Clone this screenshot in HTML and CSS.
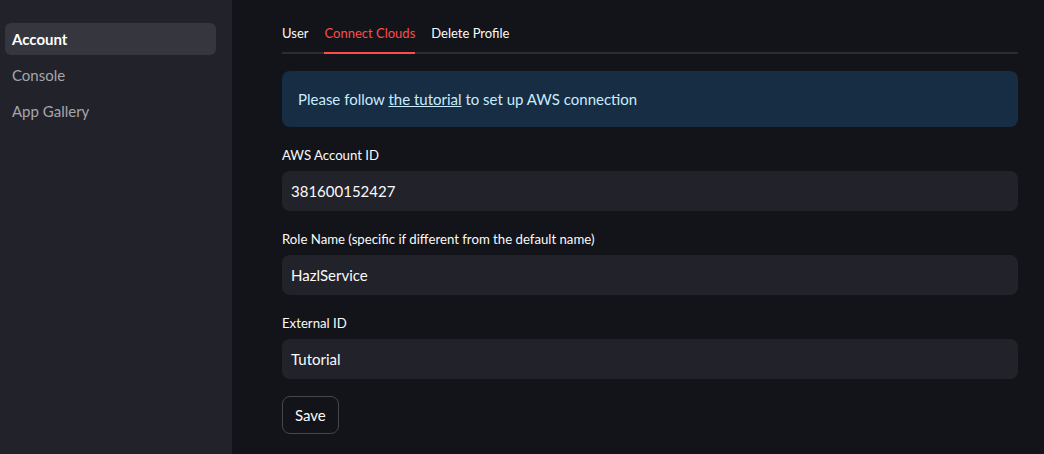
FILE: index.html
```html
<!DOCTYPE html>
<html>
<head>
<meta charset="utf-8">
<link rel="stylesheet" href="styles.css">
</head>
<body>
<aside class="sidebar">
  <nav class="nav">
    <div class="nav-item active">Account</div>
    <div class="nav-item">Console</div>
    <div class="nav-item">App Gallery</div>
  </nav>
</aside>
<main class="main">
  <div class="tabs">
    <div class="tab">User</div>
    <div class="tab active">Connect Clouds</div>
    <div class="tab">Delete Profile</div>
  </div>
  <div class="content">
    <div class="alert">Please follow <a class="link" href="#">the tutorial</a> to set up AWS connection</div>
    <div class="field">
      <label class="label">AWS Account ID</label>
      <div class="input">381600152427</div>
    </div>
    <div class="field">
      <label class="label">Role Name (specific if different from the default name)</label>
      <div class="input">HazlService</div>
    </div>
    <div class="field">
      <label class="label">External ID</label>
      <div class="input">Tutorial</div>
    </div>
    <div><button class="btn">Save</button></div>
  </div>
</main>
</body>
</html>
```
FILE: styles.css
```css
* { box-sizing: border-box; }
html, body { margin: 0; height: 100%; }
body {
  display: flex;
  background: #131419;
  color: #fafafa;
  font-family: Lato, "Liberation Sans", sans-serif;
  height: 454px;
  overflow: hidden;
}
.sidebar {
  width: 232px;
  flex: none;
  background: #22222a;
  padding: 23px 16px 0 5px;
}
.nav { display: flex; flex-direction: column; gap: 4px; }
.nav-item {
  height: 32px;
  line-height: 32px;
  padding-left: 7px;
  font-size: 15px;
  color: #a6a6ab;
  border-radius: 6px;
}
.nav-item.active {
  background: #35363e;
  color: #ffffff;
  font-weight: 700;
}
.main {
  flex: 1;
  padding: 14px 26px 0 50px;
}
.tabs {
  display: flex;
  gap: 16px;
  border-bottom: 2px solid #2c2d34;
}
.tab {
  height: 40px;
  display: flex;
  align-items: center;
  font-size: 13px;
  color: #fafafa;
  margin-bottom: -2px;
  border-bottom: 2px solid transparent;
}
.tab.active { color: #ff4b4b; border-bottom-color: #ff4b4b; }
.content {
  display: flex;
  flex-direction: column;
  gap: 16px;
  margin-top: 17px;
}
.alert {
  background: #172d43;
  color: #c7ebff;
  border-radius: 8px;
  height: 56px;
  padding: 0 16px;
  display: flex;
  align-items: center;
  font-size: 15px;
  white-space: pre;
}
.link { color: #c7ebff; text-decoration: underline; }
.field { display: flex; flex-direction: column; }
.label {
  height: 24px;
  line-height: 24px;
  font-size: 13.2px;
  color: #fafafa;
  margin-bottom: 4px;
}
.input {
  height: 40px;
  background: #22232a;
  border-radius: 8px;
  padding: 0 9px;
  display: flex;
  align-items: center;
  font-size: 15px;
  color: #fafafa;
}
.btn {
  height: 38px;
  padding: 0 12px;
  background: #131419;
  border: 1px solid #45464d;
  border-radius: 8px;
  color: #fafafa;
  font-family: inherit;
  font-size: 15px;
  margin-top: 1px;
}
```
